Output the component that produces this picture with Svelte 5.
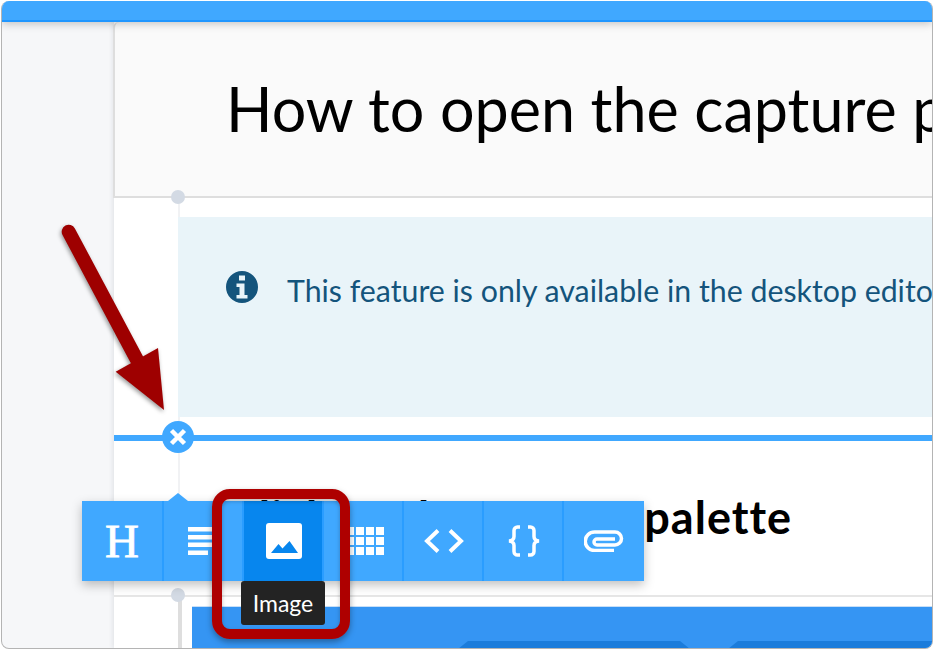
<script lang="ts">
  const tools = ['heading', 'text', 'image', 'table', 'code', 'snippet', 'attach'];
  const gridCells = Array.from({ length: 12 }, (_, i) => i);
</script>

<div class="window">
  <div class="topbar"></div>
  <div class="main">
    <div class="gutter"></div>
    <div class="page">
      <span class="guide"></span>
      <header class="title-block">
        <h1>How to open the capture palette</h1>
        <span class="dot"></span>
      </header>

      <div class="callout">
        <svg class="info" viewBox="0 0 32 32" aria-hidden="true">
          <path fill-rule="evenodd" d="M16 0a16 16 0 1 1 0 32a16 16 0 0 1 0-32zM13 4.500v5h6v-5zM10.500 12.500v3.500h3v8h-3v3.500h11v-3.500h-3v-11.500z" />
        </svg>
        <p>This feature is only available in the desktop editor.</p>
      </div>

      <div class="insert-line">
        <button class="close-btn" aria-label="Close">
          <svg viewBox="0 0 18 18"><path d="M2.500 2.500l13 13M15.500 2.500l-13 13" /></svg>
        </button>
      </div>

      <section class="step">
        <h2>Click on the capture palette</h2>
        <span class="dot"></span>
      </section>

      <div class="shot-row">
        <div class="shot">
          <span class="tab tab-a"></span>
          <span class="tab tab-b"></span>
        </div>
      </div>
    </div>
  </div>

  <div class="toolbar">
    <span class="pointer"></span>
    {#each tools as tool}
      <button class="tool" class:active={tool === 'image'} aria-label={tool}>
        {#if tool === 'heading'}
          <span class="h-glyph">H</span>
        {:else if tool === 'text'}
          <svg class="lines" width="28" height="28" viewBox="0 0 28 28"><path d="M0 0h28v4.500H0zM0 8h28v4.500H0zM0 15.500h28v4.500H0zM0 23.500h20v4.500H0z" /></svg>
        {:else if tool === 'image'}
          <svg width="36" height="36" viewBox="0 0 36 36">
            <rect width="36" height="36" rx="3" />
            <path class="hills" d="M5 30l7.500-9 4 4.500 7-7.500 8.500 12z" />
          </svg>
        {:else if tool === 'table'}
          <div class="grid-icon">
            {#each gridCells as cell (cell)}<i></i>{/each}
          </div>
        {:else if tool === 'code'}
          <svg class="line-icon" width="40" height="24" viewBox="0 0 40 24"><path d="M14 1.500L3 12l11 10.500M26 1.500L37 12 26 22.500" /></svg>
        {:else if tool === 'snippet'}
          <svg class="line-icon thin" width="36" height="32" viewBox="0 0 36 32"><path d="M14 2h-2.500a3.500 3.500 0 0 0-3.500 3.500v6q0 4-5 4.500q5 .5 5 4.500v6a3.500 3.500 0 0 0 3.500 3.500H14M22 2h2.500a3.500 3.500 0 0 1 3.500 3.500v6q0 4 5 4.500q-5 .5-5 4.500v6a3.500 3.500 0 0 1-3.500 3.500H22" /></svg>
        {:else}
          <svg class="line-icon thin clip" width="40" height="22" viewBox="0 0 40 22"><path d="M30 20.500H10.500a9 9 0 0 1 0-18.500H31a6.500 6.500 0 0 1 0 13H13a3 3 0 0 1 0-6h18" /></svg>
        {/if}
      </button>
    {/each}
  </div>
  <div class="tooltip">Image</div>
</div>

<!-- annotations drawn over the screenshot -->
<div class="highlight"></div>
<svg class="arrow" width="934" height="650" viewBox="0 0 934 650" aria-hidden="true">
  <path class="shaft" d="M68.700 231.700L136.500 359" />
  <path d="M164 410l-6-62-42.300 23.700z" />
</svg>

<style>
  :global(body) {
    margin: 0;
    background: #fff;
  }

  :global(#app) {
    position: relative;
    width: 934px;
    height: 650px;
    overflow: hidden;
    font-family: Lato, 'Noto Sans', sans-serif;
  }

  .window {
    position: relative;
    box-sizing: border-box;
    width: 932px;
    height: 648px;
    margin: 1px 0 0 1px;
    border: solid #b4b4b4;
    border-width: 0 1px 1px 1px;
    border-radius: 8px;
    overflow: hidden;
    display: flex;
    flex-direction: column;
    background: #f6f7f9;
  }

  .topbar {
    position: relative;
    z-index: 2;
    flex: none;
    box-sizing: border-box;
    height: 21px;
    background: #40a8ff;
    border-bottom: 2px solid #1f96ff;
    box-shadow: 0 2px 8px rgba(0, 0, 0, 0.22);
  }

  .main {
    flex: 1;
    display: flex;
    min-height: 0;
  }

  .gutter {
    flex: none;
    width: 112px;
  }

  .page {
    position: relative;
    flex: 1;
    background: #fff;
    box-shadow: -2px 0 4px rgba(30, 40, 60, 0.08);
    display: flex;
    flex-direction: column;
  }

  .guide {
    position: absolute;
    left: 64px;
    top: 0;
    height: 478px;
    width: 2px;
    background: #f1f2f4;
  }

  .title-block {
    position: relative;
    box-sizing: border-box;
    flex: none;
    height: 176px;
    margin-left: -1px;
    padding: 47px 0 0 111px;
    background: #fafafa;
    border-left: 2px solid #dedede;
    border-bottom: 2px solid #dedede;
    border-top-left-radius: 6px;
  }

  h1 {
    margin: 0;
    font-size: 61px;
    font-weight: 400;
    line-height: 80px;
    color: #000;
    white-space: nowrap;
  }

  .dot {
    position: absolute;
    left: 56px;
    bottom: -8px;
    width: 14px;
    height: 14px;
    border-radius: 50%;
    background: #d3dae4;
    z-index: 1;
  }

  .callout {
    position: relative;
    flex: none;
    box-sizing: border-box;
    height: 200px;
    margin: 19px 0 0 64px;
    padding: 54px 0 0 48px;
    background: #e9f4f9;
    display: flex;
    gap: 29px;
    overflow: hidden;
  }

  .info {
    flex: none;
    width: 32px;
    height: 32px;
    fill: #14547c;
  }

  .callout p {
    margin: 0;
    font-size: 30.300px;
    line-height: 38px;
    color: #14547c;
    white-space: nowrap;
  }

  .insert-line {
    position: relative;
    flex: none;
    height: 6px;
    margin-top: 18px;
    background: #40a8ff;
  }

  .close-btn {
    position: absolute;
    left: 48px;
    top: -14px;
    width: 32px;
    height: 32px;
    padding: 7px;
    border: none;
    border-radius: 50%;
    background: #40a8ff;
  }

  .close-btn svg {
    display: block;
    width: 18px;
    height: 18px;
    fill: none;
    stroke: #fff;
    stroke-width: 4.500;
  }

  .step {
    position: relative;
    flex: none;
    box-sizing: border-box;
    height: 156px;
    padding-top: 53px;
    border-bottom: 2px solid #e6e6e6;
    white-space: nowrap;
  }

  .step .dot {
    left: 57px;
    bottom: -7px;
  }

  h2 {
    margin: 0 0 0 114px;
    font-size: 45px;
    font-weight: 700;
    line-height: 46px;
    letter-spacing: 1px;
    word-spacing: -4px;
    color: #000;
  }

  .shot-row {
    flex: 1;
    margin-left: 64px;
    padding: 9px 0 0 10px;
    border-left: 4px solid #dedede;
  }

  .shot {
    position: relative;
    height: 42px;
    background: #3595f3;
    border-top: 1px solid #c8dff7;
    border-bottom-right-radius: 6px;
    overflow: hidden;
  }

  .tab {
    position: absolute;
    bottom: 0;
    height: 8px;
    background: #1b7cdb;
    clip-path: polygon(0 100%, 10px 0, calc(100% - 10px) 0, 100% 100%);
  }

  .tab-a { left: 266px; width: 232px; }
  .tab-b { left: 536px; width: 400px; }

  .toolbar {
    position: absolute;
    z-index: 3;
    left: 80px;
    top: 500px;
    display: flex;
    gap: 2px;
    height: 80px;
    background: #2a9dff;
    box-shadow: 0 4px 10px rgba(0, 0, 0, 0.25);
  }

  .pointer {
    position: absolute;
    left: 86px;
    top: -8px;
    width: 20px;
    height: 8px;
    background: #40a8ff;
    clip-path: polygon(0 100%, 50% 0, 100% 100%);
  }

  .tool {
    display: flex;
    align-items: center;
    justify-content: center;
    box-sizing: border-box;
    width: 78px;
    padding: 0 0 0 2px;
    border: none;
    background: #40a8ff;
    color: #fff;
  }

  .tool:first-of-type,
  .tool:last-of-type {
    width: 80px;
  }

  .tool svg {
    display: block;
    fill: #fff;
  }

  .tool.active {
    background: #0786ee;
  }

  .tool .hills {
    fill: #0786ee;
  }

  .tool .line-icon {
    fill: none;
    stroke: #fff;
    stroke-width: 4;
  }

  .tool .line-icon.thin {
    stroke-width: 3.500;
  }

  .tool .lines {
    margin-left: -4px;
  }

  .tool .clip {
    margin-left: -2px;
  }

  .h-glyph {
    margin-left: -2px;
    font-family: 'Liberation Serif', serif;
    font-size: 47px;
    font-weight: 400;
    line-height: 1;
    -webkit-text-stroke: 0.8px #fff;
  }

  .grid-icon {
    display: grid;
    grid-template-columns: repeat(4, 8px);
    grid-auto-rows: 8px;
    gap: 2px;
    margin-left: 2px;
  }

  .grid-icon i {
    background: #fff;
  }

  .tooltip {
    position: absolute;
    z-index: 4;
    left: 239px;
    top: 580px;
    width: 84px;
    height: 44px;
    border-radius: 3px;
    background: #232323;
    color: #fff;
    font-size: 23px;
    line-height: 44px;
    text-align: center;
  }

  .highlight {
    position: absolute;
    z-index: 5;
    left: 212px;
    top: 489px;
    box-sizing: border-box;
    width: 138px;
    height: 150px;
    border: 10px solid #ae0000;
    border-radius: 18px;
    box-shadow: 0 3px 6px rgba(0, 0, 0, 0.35), inset 0 2px 4px rgba(0, 0, 0, 0.25);
  }

  .arrow {
    position: absolute;
    z-index: 5;
    left: 0;
    top: 0;
    pointer-events: none;
    filter: drop-shadow(-1px 2px 2px rgba(0, 0, 0, 0.4));
  }

  .arrow path {
    fill: #9e0000;
  }

  .arrow .shaft {
    fill: none;
    stroke: #9e0000;
    stroke-width: 14;
    stroke-linecap: round;
  }
</style>
